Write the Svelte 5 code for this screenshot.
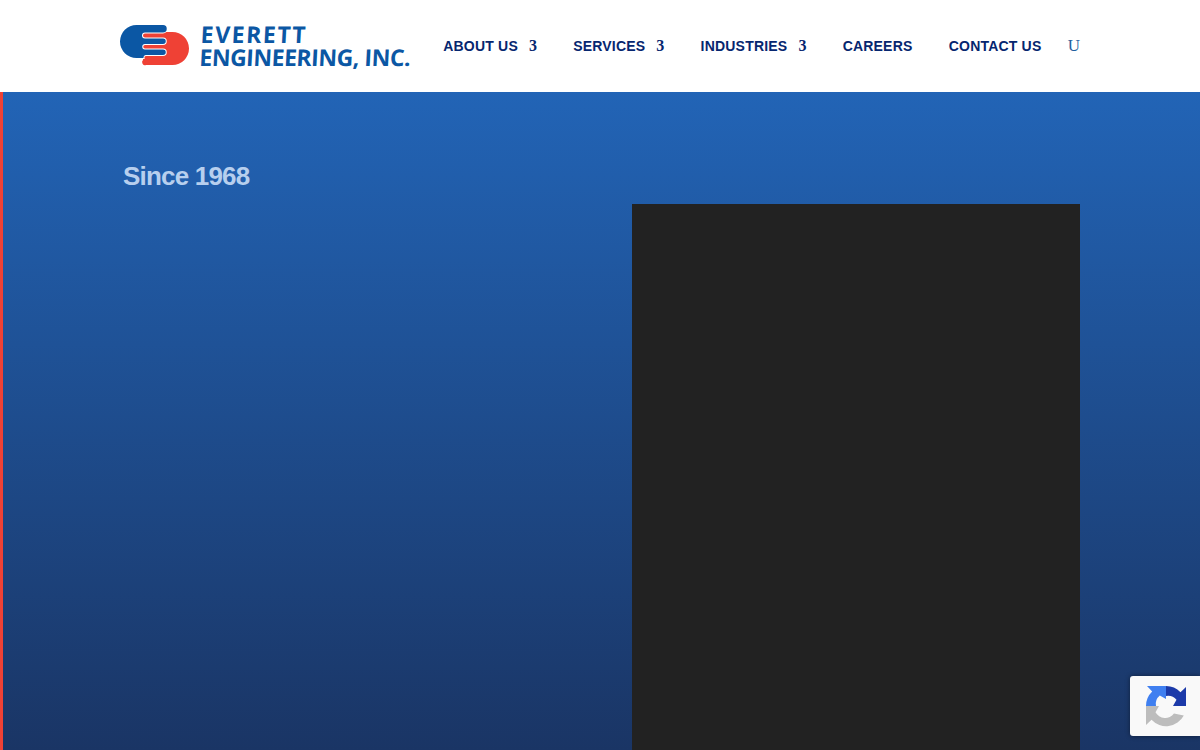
<script>
  const menu = [
    { label: "ABOUT US", caret: true },
    { label: "SERVICES", caret: true },
    { label: "INDUSTRIES", caret: true },
    { label: "CAREERS", caret: false },
    { label: "CONTACT US", caret: false }
  ];

  // the recaptcha arms share this arrow head
  const arm = "M22 2A20 20 0 0 1 36.5 8.2L42 3V22H29L32.5 15.8A11 11 0 0 0 22 12Z";
</script>

<header class="top">
  <div class="wrap bar">
    <a class="logo" href="#top">
      <svg class="mark" width="72" height="46" viewBox="0 0 72 46">
        <path class="red" d="M24 10H53.5A16.5 16.5 0 0 1 53.5 43H27A3 3 0 0 1 24 38Z" />
        <path class="blue seam" d="M44 3A3.7 3.7 0 0 1 44 10.5H26A3 3 0 0 0 26 16.5H44A2.7 2.7 0 0 1 44 22H26A2.7 2.7 0 0 0 26 27.5H44A2.7 2.7 0 0 1 44 33H27A2.5 2.5 0 0 0 24.5 36H17.5A16.5 16.5 0 0 1 17.5 3Z" />
      </svg>
      <span class="name">
        <span class="first">EVERETT</span>
        <span class="second">ENGINEERING, INC.</span>
      </span>
    </a>
    <nav class="menu">
      {#each menu as item}
        <a class="item" href="#top">
          {item.label}
          {#if item.caret}<span class="caret">3</span>{/if}
        </a>
      {/each}
      <span class="search">U</span>
    </nav>
  </div>
</header>

<main class="hero">
  <div class="wrap columns">
    <div class="left">
      <h2>Since 1968</h2>
    </div>
    <div class="video"></div>
  </div>
</main>

<div class="badge">
  <svg width="44" height="44" viewBox="0 0 44 44">
    <path class="arm-grey" d="M2 41V22H15L11.5 28.2A11 11 0 0 0 30 29.5L39.8 31.5A20 20 0 0 1 7.5 35.8Z" />
    <path class="arm-light" d={arm} transform="rotate(-90 22 22)" />
    <path class="arm-dark" d={arm} />
  </svg>
</div>

<style>
  :global(body) {
    margin: 0;
    height: 750px;
    overflow: hidden;
    font-family: "Liberation Sans", Arial, sans-serif;
  }

  .wrap {
    width: 960px;
    margin: 0 auto;
  }

  .top {
    height: 92px;
    background: #fff;
  }

  .bar {
    height: 100%;
    display: flex;
    align-items: center;
    justify-content: space-between;
  }

  .logo {
    display: flex;
    align-items: center;
    gap: 9px;
    margin: -2px 0 0 -1px;
    text-decoration: none;
  }

  .mark {
    display: block;
  }

  .red {
    fill: #ef4135;
  }

  .blue {
    fill: #0b57a4;
  }

  .seam {
    stroke: #fff;
    stroke-width: 2;
    paint-order: stroke;
  }

  .name {
    display: flex;
    flex-direction: column;
    margin-top: 2px;
    font-family: "Open Sans", sans-serif;
    font-size: 23px;
    line-height: 23px;
    font-weight: 700;
    color: #0b57a4;
    white-space: nowrap;
    transform: skewX(-3deg);
  }

  .first {
    letter-spacing: 1.6px;
  }

  .second {
    letter-spacing: -0.45px;
  }

  .menu {
    display: flex;
    align-items: center;
    gap: 36.25px;
  }

  .item {
    display: flex;
    align-items: center;
    gap: 11px;
    font-size: 14px;
    font-weight: 700;
    letter-spacing: 0.2px;
    color: #06266f;
    text-decoration: none;
  }

  .caret {
    font-family: "Liberation Serif", serif;
    font-size: 16px;
    letter-spacing: 0;
  }

  .search {
    margin-left: -10px;
    font-family: "Liberation Serif", serif;
    font-size: 17px;
    color: #1f5f9e;
  }

  .hero {
    position: relative;
    height: 658px;
    background: linear-gradient(180deg, #2264b6 0%, #1a3565 100%);
    overflow: hidden;
  }

  .hero::before {
    content: "";
    position: absolute;
    left: 0;
    top: 0;
    bottom: 0;
    width: 3px;
    background: #ef4135;
  }

  .columns {
    display: flex;
    justify-content: space-between;
    height: 100%;
  }

  .left {
    padding: 68px 0 0 3px;
  }

  h2 {
    margin: 0;
    font-size: 26px;
    line-height: 32px;
    font-weight: 700;
    letter-spacing: -0.8px;
    color: #b7cfee;
  }

  .video {
    width: 448px;
    margin-top: 112px;
    background: #222;
  }

  .badge {
    position: fixed;
    left: 1130px;
    top: 676px;
    width: 70px;
    height: 60px;
    padding: 8px 0 0 14px;
    box-sizing: border-box;
    background: #f9f9f9;
    border-radius: 3px 0 0 3px;
    box-shadow: 0 0 5px rgba(0, 0, 0, 0.45);
  }

  .badge svg {
    display: block;
  }

  .arm-grey {
    fill: #bdbdbd;
  }

  .arm-light {
    fill: #3f7ff0;
  }

  .arm-dark {
    fill: #1c3aa9;
  }
</style>
